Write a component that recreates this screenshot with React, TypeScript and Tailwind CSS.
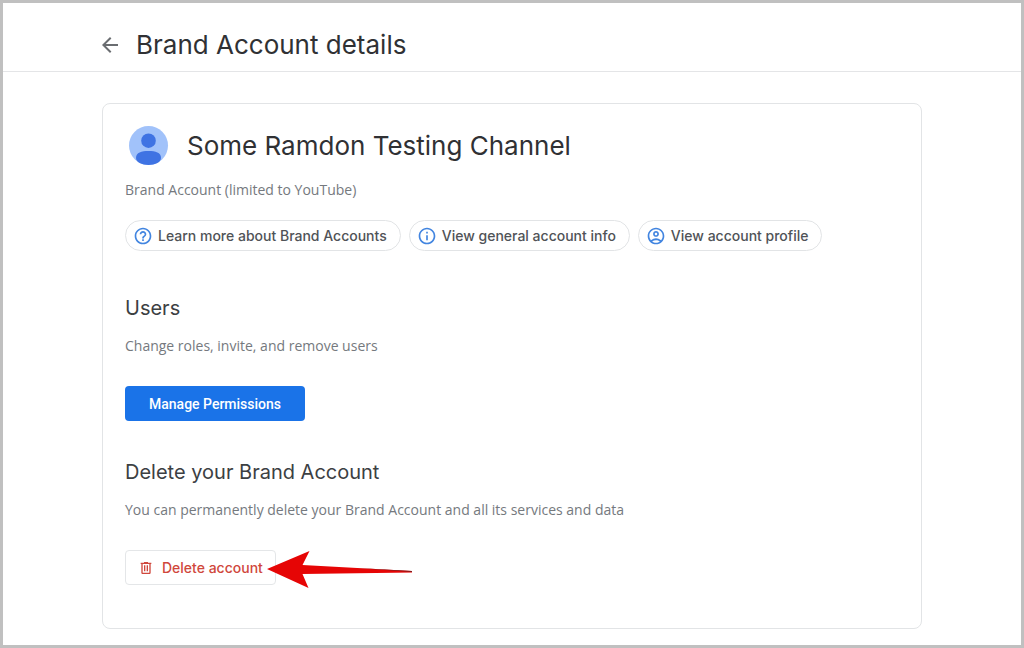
import React, { ReactNode } from 'react';
import { MdArrowBack, MdHelpOutline, MdInfoOutline, MdOutlineAccountCircle } from 'react-icons/md';

export default function BrandAccountPage() {
  return (
    <div className="min-h-screen flex flex-col bg-white border-3 border-[#c0c0c0] font-['Inter',sans-serif]">
      <header className="border-b border-[#e4e5e7] pt-6 pb-2 px-4">
        <div className="max-w-[820px] mx-auto flex items-center gap-3.5">
          <a href="#" aria-label="Back" className="-ml-1 text-[#6a6d71]">
            <MdArrowBack size={24} />
          </a>
          <h1 className="text-[26px] leading-9 text-[#303134]">Brand Account details</h1>
        </div>
      </header>

      <main className="flex-1 px-4 pt-[31px] pb-4">
        <section className="max-w-[820px] mx-auto border border-[#e2e4e6] rounded-lg px-[22px] pt-[22px] pb-[43px]">
          <div className="flex items-center gap-[18px] pl-1">
            <Avatar />
            <h2 className="text-[26px] leading-10 text-[#303134]">Some Ramdon Testing Channel</h2>
          </div>
          <p className="mt-3.5 text-sm text-[#75797e] font-['Open_Sans',sans-serif]">Brand Account (limited to YouTube)</p>

          <div className="mt-5 pb-1.5 flex flex-wrap gap-2">
            <Chip icon={<MdHelpOutline size={20} />} label="Learn more about Brand Accounts" />
            <Chip icon={<MdInfoOutline size={20} />} label="View general account info" />
            <Chip icon={<MdOutlineAccountCircle size={20} />} label="View account profile" />
          </div>

          <Setting title="Users" text="Change roles, invite, and remove users">
            <button className="h-[35px] px-6 rounded bg-[#1a73e8] text-white text-sm font-medium font-['Roboto',sans-serif]">
              Manage Permissions
            </button>
          </Setting>

          <Setting title="Delete your Brand Account" text="You can permanently delete your Brand Account and all its services and data">
            <div className="relative w-fit">
              <button className="h-[35px] px-3 rounded border border-[#e4e6e8] text-[#d0473c] text-sm font-medium flex items-center gap-2">
                <TrashIcon />
                Delete account
              </button>
              <Pointer />
            </div>
          </Setting>
        </section>
      </main>
    </div>
  );
}

function Chip({ icon, label }: { icon: ReactNode; label: string }) {
  return (
    <a href="#" className="h-[31px] pl-[7px] pr-[13px] flex items-center gap-[5px] rounded-full border border-[#e2e4e6] text-sm font-medium text-[#505357]">
      <span className="text-[#4285e0]">{icon}</span>
      {label}
    </a>
  );
}

function Setting({ title, text, children }: { title: string; text: string; children: ReactNode }) {
  return (
    <div className="mt-[37px]">
      <h3 className="text-xl leading-7 text-[#3c4043]">{title}</h3>
      <p className="mt-3.5 mb-[30px] text-sm text-[#75797e] font-['Open_Sans',sans-serif]">{text}</p>
      {children}
    </div>
  );
}

function Avatar() {
  return (
    <svg width="40" height="40" viewBox="0 0 40 40" className="shrink-0">
      <circle cx="19.500" cy="19.500" r="19.500" fill="#a1c2fa" />
      <circle cx="19.500" cy="14.700" r="7.300" fill="#3f73e3" />
      <path d="M7 32c0-5.500 5.500-7 12.500-7s12.500 1.500 12.500 7c0 4-5.500 7-12.500 7S7 36 7 32z" fill="#3f73e3" />
    </svg>
  );
}

function TrashIcon() {
  return (
    <svg width="16" height="16" viewBox="0 0 24 24" fill="currentColor">
      <path d="M15 4V3H9v1H4v2h1v13c0 1.100.9 2 2 2h10c1.100 0 2-.9 2-2V6h1V4h-5zm2 15H7V6h10v13zM9 8h2v9H9V8zm4 0h2v9h-2V8z" />
    </svg>
  );
}

function Pointer() {
  return (
    <svg width="146" height="39" viewBox="0 0 146 39" className="absolute left-[142px] top-0 pointer-events-none">
      <path d="M0 19 42.500 1 35.500 15 145 21V22.500L35.500 24 41.500 38z" fill="#e60505" />
      <path d="M90 18 145 21V22z" fill="#7d1d1d" />
    </svg>
  );
}
